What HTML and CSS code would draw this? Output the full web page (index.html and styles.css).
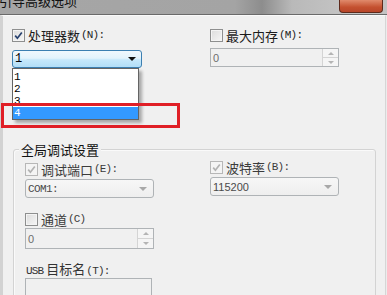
FILE: index.html
```html
<!DOCTYPE html>
<html lang="zh-CN">
<head>
    <meta charset="UTF-8">
    <title>引导高级选项</title>
    <link rel="stylesheet" href="styles.css">
</head>
<body>

<div class="window">
    <div class="titlebar">
        <span class="title">引导高级选项</span>
        <span class="close"></span>
    </div>

    <div class="client">
        <div class="top-row">
            <div class="field">
                <div class="check-row">
                    <span class="box"><svg viewBox="0 0 11 11"><path d="M2.2 5.6 L4.4 8.2 L8.8 2.4"/></svg></span>
                    <span class="cjk">处理器数</span><span class="acc">(N):</span>
                </div>
                <div class="combo focus"><span class="value">1</span><span class="arrow"></span></div>
                <ul class="droplist">
                    <li>1</li>
                    <li>2</li>
                    <li>3</li>
                    <li class="selected">4</li>
                </ul>
            </div>
            <div class="field">
                <div class="check-row">
                    <span class="box"></span>
                    <span class="cjk">最大内存</span><span class="acc">(M):</span>
                </div>
                <div class="spinner top-spin"><span class="value">0</span><span class="spin"><i class="up"></i><i class="down"></i></span></div>
            </div>
        </div>

        <div class="group">
            <div class="group-title">全局调试设置</div>
            <div class="group-grid">
                <div class="col">
                    <div class="check-row dim">
                        <span class="box disabled"><svg viewBox="0 0 11 11"><path d="M2.2 5.6 L4.4 8.2 L8.8 2.4"/></svg></span>
                        <span class="cjk">调试端口</span><span class="acc">(E):</span>
                    </div>
                    <div class="combo disabled"><span class="value mono">COM1:</span><span class="arrow"></span></div>

                    <div class="check-row dim second">
                        <span class="box"></span>
                        <span class="cjk">通道</span><span class="acc">(C)</span>
                    </div>
                    <div class="spinner"><span class="value">0</span><span class="spin"><i class="up"></i><i class="down"></i></span></div>

                    <div class="text-row"><span class="acc">USB</span> <span class="cjk">目标名</span><span class="acc">(T):</span></div>
                    <div class="textbox"></div>
                </div>
                <div class="col">
                    <div class="check-row dim raised">
                        <span class="box disabled"><svg viewBox="0 0 11 11"><path d="M2.2 5.6 L4.4 8.2 L8.8 2.4"/></svg></span>
                        <span class="cjk">波特率</span><span class="acc">(B):</span>
                    </div>
                    <div class="combo disabled"><span class="value">115200</span><span class="arrow"></span></div>
                </div>
            </div>
        </div>
    </div>

    <!-- rote Markierung um den Eintrag 4 -->
    <div class="mark"></div>
</div>

</body>
</html>
```

FILE: styles.css
```css
body {
    margin: 0;
    background-color: #ececec;
    font-family: "Noto Sans CJK SC", "Liberation Sans", sans-serif;
    font-size: 13px;
    color: #1c1c1c;
}
.window {
    position: relative;
    width: 387px;
    height: 295px;
    overflow: hidden;
}
.titlebar {
    height: 14px;
    display: flex;
    justify-content: space-between;
    border-bottom: 1px solid #6a6a6a;
    background: linear-gradient(to right, #a6a6a6 0, #a4a4a4 235px, #8d8d8d 262px, #b9b9b9 292px, #c3c3c3 340px);
    overflow: hidden;
}
.title {
    margin-top: -7px;
    margin-left: -1px;
    font-size: 13px;
    line-height: 15px;
    color: #111;
}
.close {
    width: 42px;
    height: 12px;
    margin-right: 4px;
    border: 1px solid #5d2a1c;
    border-top: none;
    border-radius: 0 0 4px 4px;
    background: linear-gradient(#e08a6c, #c4502f 60%, #b8462a);
}
.client {
    height: 280px;
    box-sizing: border-box;
    padding: 13px 0 0 9px;
    border-left: 3px solid #d2d2d2;
    border-right: 1px solid #d6d6d6;
    border-top: 1px solid #fafafa;
    margin-right: 1px;
    background-color: #f0f0f0;
}
.top-row {
    display: grid;
    grid-template-columns: 198px 128px;
}
.field {
    position: relative;
}
.check-row {
    display: flex;
    align-items: center;
    height: 13px;
    line-height: 13px;
    white-space: nowrap;
}
.check-row .box {
    margin-right: 3px;
}
.dim {
    color: #3b3b3b;
}
.cjk {
    font-size: 13px;
}
.acc {
    font-family: "Liberation Mono", monospace;
    font-size: 11px;
    letter-spacing: -0.8px;
    margin-left: 1px;
}
.mono {
    font-family: "Liberation Mono", monospace;
    font-size: 11px;
    letter-spacing: -0.6px;
}
.box {
    width: 11px;
    height: 11px;
    border: 1px solid #8e8f8f;
    background: linear-gradient(135deg, #dcdcdc, #f6f6f6);
    box-shadow: inset 0 0 0 1px #f4f4f4;
    display: inline-flex;
    flex-shrink: 0;
}
.box svg {
    width: 11px;
    height: 11px;
}
.box path {
    fill: none;
    stroke: #27406e;
    stroke-width: 1.7;
}
.box.disabled {
    border-color: #b7b7b7;
    background: #f4f4f4;
}
.box.disabled path {
    stroke: #b2b2b2;
}
.combo {
    margin-top: 8px;
    height: 16px;
    width: 126px;
    border: 1px solid #3c7fb1;
    border-radius: 3px;
    display: flex;
    align-items: center;
    justify-content: space-between;
    padding: 0 0 0 2px;
    box-sizing: content-box;
}
.combo.focus {
    background: linear-gradient(#f0f8fd 0, #e3f3fc 45%, #c6e8fb 55%, #b2def7 100%);
}
.combo .value {
    font-size: 12px;
    line-height: 14px;
}
.focus .value {
    font-family: "Liberation Mono", monospace;
    font-size: 12px;
    color: #000;
}
.arrow {
    width: 0;
    height: 0;
    margin-right: 5px;
    border-left: 4px solid transparent;
    border-right: 4px solid transparent;
    border-top: 4px solid #111;
}
.combo.disabled {
    margin-top: 3px;
    height: 17px;
    width: 125px;
    border-color: #afb3b6;
    background: linear-gradient(#f7f7f7, #eeeeee);
    color: #4a4a4a;
}
.combo.disabled .value {
    font-size: 11px;
    font-family: "Liberation Sans", sans-serif;
}
.combo.disabled .mono {
    font-family: "Liberation Mono", monospace;
}
.combo.disabled .arrow {
    border-top-color: #a8a8a8;
    margin-right: 6px;
}
.droplist {
    position: absolute;
    left: 0;
    top: 39px;
    width: 125px;
    margin: 0;
    padding: 2px 0 0;
    list-style: none;
    background-color: #fff;
    border: 1px solid #646464;
    box-shadow: 3px 3px 3px rgba(0, 0, 0, 0.3);
}
.droplist li {
    height: 12px;
    line-height: 12px;
    padding-left: 1px;
    font-family: "Liberation Mono", monospace;
    font-size: 11px;
    color: #000;
    overflow: hidden;
}
.droplist li.selected {
    background-color: #3399ff;
    color: #fff;
}
.spinner {
    margin-top: 2px;
    height: 19px;
    width: 125px;
    border: 1px solid #afb3b6;
    background-color: #f0f0f0;
    display: flex;
    justify-content: space-between;
    align-items: center;
    padding-left: 2px;
}
.spinner.top-spin {
    margin-top: 6px;
    height: 17px;
}
.spinner .value {
    font-family: "Liberation Sans", sans-serif;
    font-size: 11px;
    color: #6d6d6d;
}
.spin {
    align-self: stretch;
    width: 15px;
    display: flex;
    flex-direction: column;
    border-left: 1px solid #d4d4d4;
}
.spin i {
    flex: 1;
    display: flex;
    align-items: center;
    justify-content: center;
    background-color: #f5f5f5;
}
.spin i + i {
    border-top: 1px solid #d4d4d4;
}
.spin i::after {
    content: "";
    border-left: 3px solid transparent;
    border-right: 3px solid transparent;
}
.spin .up::after {
    border-bottom: 3px solid #b4b4b4;
}
.spin .down::after {
    border-top: 3px solid #b4b4b4;
}
.group {
    margin: 81px 0 0 1px;
    width: 363px;
    height: 160px;
    border: 1px solid #d3d3d3;
    border-radius: 3px;
    box-shadow: inset 1px 1px 0 #fafafa;
    padding-left: 11px;
    box-sizing: border-box;
}
.group-title {
    width: max-content;
    margin: -8px 0 0 -6px;
    padding: 0 2px;
    line-height: 15px;
    background-color: #f0f0f0;
    color: #111;
}
.group-grid {
    margin-top: 6px;
    display: grid;
    grid-template-columns: 185px 128px;
}
.raised {
    margin-top: -2px;
    margin-bottom: 2px;
}
.second {
    margin-top: 15px;
}
.text-row {
    margin-top: 14px;
    height: 12px;
    line-height: 12px;
    color: #333;
    white-space: nowrap;
}
.textbox {
    margin-top: 3px;
    height: 25px;
    width: 125px;
    border: 1px solid #afb3b6;
    background-color: #f0f0f0;
}
.mark {
    position: absolute;
    left: 1px;
    top: 103px;
    width: 173px;
    height: 19px;
    border: 3px solid #e01f26;
}
```
